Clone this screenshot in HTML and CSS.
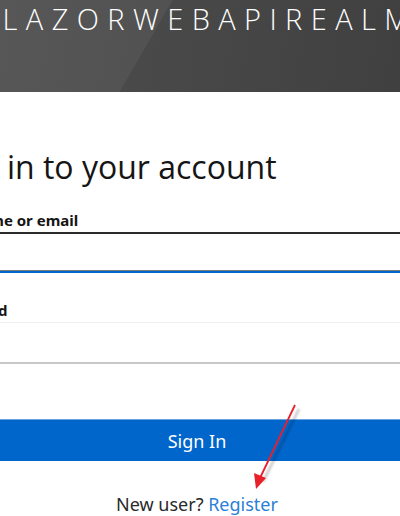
FILE: index.html
```html
<!DOCTYPE html>
<html>
<head>
<meta charset="utf-8">
<link rel="stylesheet" href="styles.css">
</head>
<body>
<div class="page">
  <header class="header">
    <div class="brand">BLAZORWEBAPIREALM</div>
  </header>
  <main class="card">
    <h1 class="title">Sign in to your account</h1>
    <form class="form">
      <div class="group">
        <label class="label">Username or email</label>
        <div class="input focused"></div>
      </div>
      <div class="group">
        <label class="label">Password</label>
        <div class="input"></div>
      </div>
      <button class="btn" type="button">Sign In</button>
    </form>
    <div class="register">New user? <a class="link">Register</a></div>
  </main>
  <svg class="arrow" width="400" height="516" viewBox="0 0 400 516">
    <defs>
      <filter id="sh" x="-50%" y="-50%" width="200%" height="200%">
        <feGaussianBlur stdDeviation="1.2"/>
      </filter>
    </defs>
    <line x1="297" y1="407" x2="261" y2="480" stroke="#000" stroke-opacity="0.22" stroke-width="2.5" filter="url(#sh)" transform="translate(2,2)"/>
    <line x1="295" y1="405" x2="260" y2="478" stroke="#e8202a" stroke-width="1.8"/>
    <polygon points="256,489 254,473 266,478" fill="#e8202a"/>
  </svg>
</div>
</body>
</html>
```
FILE: styles.css
```css
html, body {
  margin: 0;
  padding: 0;
  background: #fff;
}
body {
  width: 400px;
  height: 516px;
  overflow: hidden;
  font-family: "Noto Sans", "Open Sans", sans-serif;
  color: #151515;
}
.page {
  position: relative;
  width: 400px;
  height: 516px;
  overflow: hidden;
}
.header {
  height: 92px;
  background:
    linear-gradient(120deg, rgba(255,255,255,0.05) 0%, rgba(255,255,255,0.05) 38%, rgba(255,255,255,0) 38.2%),
    linear-gradient(100deg, #4e4e4e 0%, #484848 45%, #404040 100%);
  overflow: hidden;
}
.brand {
  margin-left: -24px;
  padding-top: 3px;
  white-space: nowrap;
  color: #fff;
  font-family: "Open Sans", sans-serif;
  font-weight: 300;
  font-size: 29px;
  line-height: 32px;
  letter-spacing: 8.4px;
}
.card {
  margin-left: -64px;
  width: 522px;
}
.title {
  margin: 57px 0 0;
  font-family: "Open Sans", sans-serif;
  font-weight: 500;
  font-size: 32px;
  line-height: 36px;
}
.form {
  margin-top: 25px;
}
.group + .group {
  margin-top: 27px;
}
.label {
  display: block;
  font-size: 15px;
  font-weight: 700;
  line-height: 20px;
  margin-bottom: 2px;
}
.input {
  height: 39px;
  border-top: 1px solid #f0f0f0;
  border-bottom: 2px solid #c8c8c8;
}
.input.focused {
  height: 37px;
  border-top: 2px solid #2b2b2b;
  border-bottom: 2px solid #0066cc;
  box-shadow: inset 0 -1px 0 #7a7a7a;
}
.btn {
  display: block;
  width: 100%;
  height: 42px;
  margin-top: 55px;
  border: 0;
  border-top: 1px solid #6aa3de;
  background: #0066cc;
  color: #fff;
  font-family: "Noto Sans", sans-serif;
  font-size: 18px;
  padding: 0;
}
.register {
  margin-top: 31px;
  text-align: center;
  font-size: 18px;
  line-height: 24px;
  color: #2a2a2a;
}
.link {
  color: #2b7fd6;
}
.arrow {
  position: absolute;
  left: 0;
  top: 0;
  pointer-events: none;
}
```
